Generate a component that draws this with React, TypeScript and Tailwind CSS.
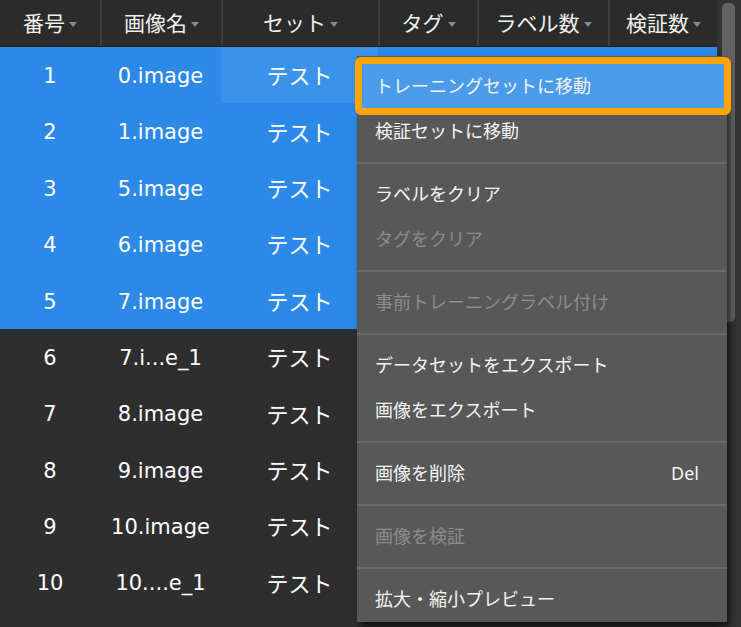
import React from "react";

const cols = [
  { label: "番号", w: "w-[100px]" },
  { label: "画像名", w: "w-[121px]" },
  { label: "セット", w: "w-[157px]" },
  { label: "タグ", w: "w-[99px]" },
  { label: "ラベル数", w: "w-[131px]" },
  { label: "検証数", w: "w-[109px]" },
];

const rows = [
  ["1", "0.image"],
  ["2", "1.image"],
  ["3", "5.image"],
  ["4", "6.image"],
  ["5", "7.image"],
  ["6", "7.i...e_1"],
  ["7", "8.image"],
  ["8", "9.image"],
  ["9", "10.image"],
  ["10", "10....e_1"],
];

function Tri() {
  return (
    <svg width="8" height="6" viewBox="0 0 8 6" className="ml-[4px] mt-[3px]">
      <path d="M0 0 L8 0 L4 5 Z" fill="#8a8a8a" />
    </svg>
  );
}

type Item = { t: string; dis?: boolean; key?: string; hl?: boolean };
const groups: Item[][] = [
  [{ t: "トレーニングセットに移動", hl: true }, { t: "検証セットに移動" }],
  [{ t: "ラベルをクリア" }, { t: "タグをクリア", dis: true }],
  [{ t: "事前トレーニングラベル付け", dis: true }],
  [{ t: "データセットをエクスポート" }, { t: "画像をエクスポート" }],
  [{ t: "画像を削除", key: "Del" }],
  [{ t: "画像を検証", dis: true }],
  [{ t: "拡大・縮小プレビュー" }],
];

export default function App() {
  return (
    <div
      className="relative w-[741px] h-[627px] overflow-hidden bg-[#333333] flex"
      style={{ fontFamily: '"Noto Sans", "Noto Sans CJK JP", sans-serif' }}
    >
      <div className="w-[717px] h-full bg-[#2e2e2e] flex flex-col">
        <div className="h-[47px] flex bg-[#2b2b2b] border-b border-[#1f1f1f]">
          {cols.map((c, i) => (
            <div
              key={i}
              className={`${c.w} h-full flex items-center justify-center pt-[1px] text-[21px] text-[#f0f0f0] ${i > 0 ? "border-l-2 border-[#3e3e3e]" : ""}`}
            >
              <span>{c.label}</span>
              <Tri />
            </div>
          ))}
        </div>
        {rows.map((r, i) => {
          const sel = i < 5;
          return (
            <div
              key={i}
              className={`h-[56.4px] flex text-[22px] text-white ${sel ? "bg-[#2c89e8]" : ""}`}
            >
              <div
                className="w-[100px] flex items-center justify-center pt-[3px] text-[21px]"
                style={{ fontFamily: '"DejaVu Sans", sans-serif' }}
              >
                {r[0]}
              </div>
              <div
                className="w-[121px] flex items-center justify-center pt-[3px] text-[21px]"
                style={{ fontFamily: '"DejaVu Sans", sans-serif' }}
              >
                {r[1]}
              </div>
              <div
                className={`w-[157px] flex items-center justify-center pt-[1px] ${i === 0 ? "bg-[#3b92ea]" : ""}`}
              >
                テスト
              </div>
              <div className="flex-1" />
            </div>
          );
        })}
      </div>
      <div className="flex-1 pl-[5px] pt-[3px]">
        <div className="w-[13px] h-[319px] rounded-[5px] bg-[#636363]" />
      </div>

      <div className="absolute left-[357px] top-[56px] w-[370px] bg-[#585858] shadow-[3px_5px_6px_rgba(0,0,0,0.6)] text-[18px]">
        {groups.map((g, gi) => (
          <div key={gi}>
            {gi > 0 && <div className="h-[2px] bg-[#6a6a6a]" />}
            <div className={`pt-2 ${gi === groups.length - 1 ? "pb-0" : "pb-2"}`}>
              {g.map((it, ii) => (
                <div
                  key={ii}
                  className={`h-[45px] flex items-center justify-between pl-[18px] pr-[28px] ${it.hl ? "bg-[#4a9bea]" : ""} ${it.dis ? "text-[#8c8c8c]" : "text-[#f4f4f4]"}`}
                >
                  <span>{it.t}</span>
                  {it.key && <span>{it.key}</span>}
                </div>
              ))}
            </div>
          </div>
        ))}
      </div>
      <div className="absolute left-[355px] top-[57px] w-[376px] h-[58px] border-[7px] border-[#ffa400] rounded-[6px]" />
    </div>
  );
}
